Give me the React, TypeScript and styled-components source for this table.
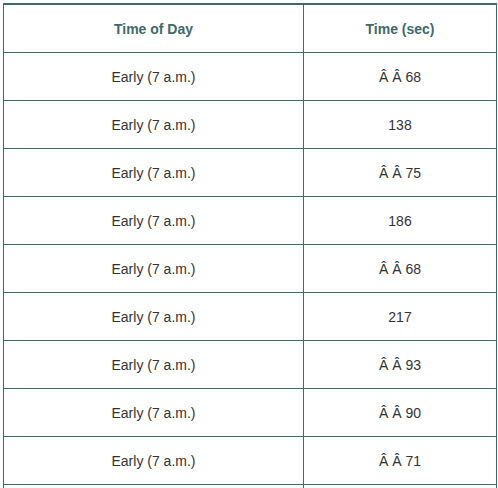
import React from "react";
import styled, { createGlobalStyle } from "styled-components";

const Global = createGlobalStyle`
  html, body { margin: 0; padding: 0; background: #ffffff; }
  body { font-family: "Liberation Sans", Arial, sans-serif; }
`;

const Wrap = styled.div`
  padding: 3px 0 0 3px;
`;

const Table = styled.table`
  border-collapse: collapse;
  width: 493px;
  table-layout: fixed;
  border-top: 2px solid #3e6a6a;
`;

const Col = styled.col<{ $w: number }>`
  width: ${(p) => p.$w}px;
`;

const Th = styled.th`
  height: 47px;
  padding: 0;
  border: 1px solid #3e6a6a;
  border-top: 2px solid #3e6a6a;
  text-align: center;
  font-size: 14px;
  font-weight: bold;
  color: #3e6a6a;
`;

const Td = styled.td`
  height: 47px;
  padding: 0;
  border: 1px solid #3e6a6a;
  text-align: center;
  font-size: 14px;
  color: #333333;
`;

const rows = ["Â Â 68", "138", "Â Â 75", "186", "Â Â 68", "217", "Â Â 93", "Â Â 90", "Â Â 71"];

export default function App() {
  return (
    <Wrap>
      <Global />
      <Table>
        <colgroup>
          <Col $w={300} />
          <Col $w={193} />
        </colgroup>
        <thead>
          <tr>
            <Th>Time of Day</Th>
            <Th>Time (sec)</Th>
          </tr>
        </thead>
        <tbody>
          {rows.map((r, i) => (
            <tr key={i}>
              <Td>Early (7 a.m.)</Td>
              <Td>{r}</Td>
            </tr>
          ))}
          <tr>
            <Td />
            <Td />
          </tr>
        </tbody>
      </Table>
    </Wrap>
  );
}
